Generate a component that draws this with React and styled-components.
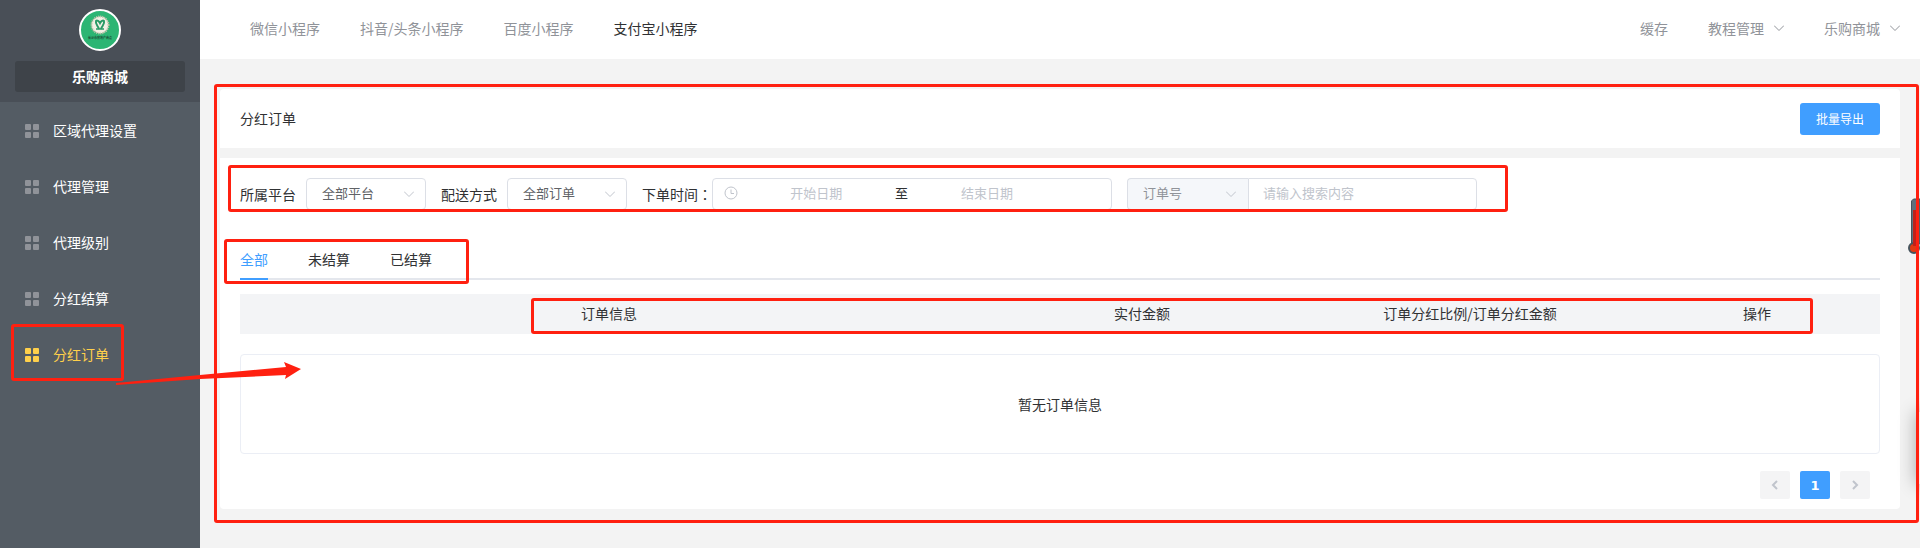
import React from "react";
import styled, { createGlobalStyle } from "styled-components";

const GlobalStyle = createGlobalStyle`
  * {
    box-sizing: border-box;
  }

  body {
    margin: 0;
    background-color: #f3f3f3;
    color: #303133;
    font-family: "Noto Sans CJK SC", sans-serif;
    font-size: 14px;
    line-height: 20px;
  }

  button,
  input,
  select {
    font-family: inherit;
  }
`;

const Page = styled.div`
  position: relative;
  display: flex;
  min-height: 100vh;
  overflow: hidden;
`;

const Sidebar = styled.aside`
  flex: none;
  width: 200px;
  background-color: #545c64;
`;

const Shop = styled.div`
  display: flex;
  flex-direction: column;
  align-items: center;
  gap: 10px;
  padding: 9px 15px 10px;
  background-color: #494f57;
`;

const ShopName = styled.div`
  width: 100%;
  padding: 5px 0 6px;
  border-radius: 3px;
  background-color: #3e4349;
  color: #ffffff;
  font-weight: bold;
  text-align: center;
`;

const MenuItem = styled.a`
  position: relative;
  display: flex;
  align-items: center;
  gap: 14px;
  height: 56px;
  padding-left: 25px;
  color: ${(props) => (props.$active ? "#ffd04b" : "#ffffff")};
  text-decoration: none;

  svg {
    fill: ${(props) => (props.$active ? "#ffd04b" : "#909399")};
  }
`;

const MenuIcon = styled.svg`
  margin-top: 2px;
`;

const Main = styled.div`
  flex: 1;
  min-width: 0;
`;

const Header = styled.header`
  display: flex;
  align-items: center;
  justify-content: space-between;
  height: 59px;
  padding: 0 20px 3px 50px;
  background-color: #ffffff;
`;

const Nav = styled.nav`
  display: flex;
  gap: 40px;
`;

const NavLink = styled.a`
  display: flex;
  align-items: center;
  gap: 10px;
  color: ${(props) => (props.$active ? "#303133" : "#909399")};
  text-decoration: none;
`;

const Content = styled.main`
  position: relative;
  display: flex;
  flex-direction: column;
  gap: 10px;
  padding: 30px 20px 39px;
`;

const TitleBar = styled.div`
  display: flex;
  align-items: center;
  justify-content: space-between;
  height: 59px;
  padding: 0 20px;
  border-radius: 4px 4px 0 0;
  background-color: #ffffff;
`;

const Title = styled.h1`
  margin: 0;
  padding-bottom: 2px;
  font-size: 14px;
  font-weight: normal;
`;

const ExportButton = styled.button`
  width: 80px;
  height: 32px;
  padding: 0;
  border: none;
  border-radius: 3px;
  background-color: #409eff;
  color: #ffffff;
  font-size: 12px;
`;

const Card = styled.section`
  padding: 20px 20px 10px;
  border-radius: 0 0 4px 4px;
  background-color: #ffffff;
`;

const Filters = styled.form`
  position: relative;
  display: flex;
  align-items: center;
  gap: 15px;
  margin-bottom: 30px;
`;

const Field = styled.div`
  display: flex;
  align-items: center;
  gap: ${(props) => props.$gap || "0"};
`;

/* the TC face centres the full-width colon */
const Colon = styled.span`
  font-family: "Noto Sans CJK TC", sans-serif;
`;

const SelectBox = styled.div`
  position: relative;
  width: 120px;

  svg {
    position: absolute;
    top: 10px;
    right: 12px;
    pointer-events: none;
  }
`;

const Select = styled.select`
  appearance: none;
  display: block;
  width: 100%;
  height: 32px;
  padding: 0 15px 4px;
  border: 1px solid #dcdfe6;
  border-radius: 4px;
  background-color: #ffffff;
  color: #606266;
  font-size: 13px;
`;

const DateRange = styled.div`
  display: flex;
  align-items: center;
  width: 400px;
  height: 32px;
  padding: 0 11px 3px;
  border: 1px solid #dcdfe6;
  border-radius: 4px;
  font-size: 13px;

  svg {
    flex: none;
    margin-right: 5px;
  }
`;

const DateInput = styled.input`
  width: 39%;
  padding: 0;
  border: none;
  outline: none;
  background: none;
  font-size: 13px;
  text-align: center;

  &::placeholder {
    color: #c0c4cc;
  }
`;

const Separator = styled.span`
  width: 24px;
  text-align: center;
`;

const Search = styled.div`
  display: flex;
  width: 350px;

  ${SelectBox} {
    width: 121px;
  }

  ${Select} {
    border-right: none;
    border-radius: 4px 0 0 4px;
    background-color: #f5f7fa;
    color: #909399;
  }
`;

const SearchInput = styled.input`
  flex: 1;
  min-width: 0;
  height: 32px;
  padding: 0 14px 4px;
  border: 1px solid #dcdfe6;
  border-radius: 0 4px 4px 0;
  font-size: 13px;

  &::placeholder {
    color: #c0c4cc;
  }
`;

const Tabs = styled.div`
  position: relative;
  display: flex;
  gap: 40px;
  margin-bottom: 14px;
  box-shadow: inset 0 -2px #e4e7ed;
`;

const Tab = styled.button`
  height: 40px;
  padding: 0;
  border: none;
  border-bottom: 2px solid ${(props) => (props.$active ? "#409eff" : "transparent")};
  background: none;
  color: ${(props) => (props.$active ? "#409eff" : "#303133")};
  font-size: 14px;
`;

const TableWrap = styled.div`
  position: relative;
  margin-bottom: 20px;
`;

const Table = styled.table`
  width: 100%;
  border-collapse: collapse;
  table-layout: fixed;
`;

const Th = styled.th`
  width: ${(props) => props.$width};
  height: 40px;
  padding: 0 0 2px;
  background-color: #f3f4f6;
  font-weight: normal;
`;

const Empty = styled.div`
  display: flex;
  align-items: center;
  justify-content: center;
  height: 100px;
  margin-bottom: 17px;
  border: 1px solid #ebeef5;
  border-radius: 4px;
`;

const Pagination = styled.div`
  display: flex;
  justify-content: flex-end;
  gap: 10px;
  padding-right: 10px;
`;

const PageButton = styled.button`
  display: flex;
  align-items: center;
  justify-content: center;
  width: 30px;
  height: 28px;
  padding: 0;
  border: none;
  border-radius: 2px;
  background-color: ${(props) => (props.$active ? "#409eff" : "#f4f4f5")};
  color: ${(props) => (props.$active ? "#ffffff" : "#c0c4cc")};
  font-family: "DejaVu Sans", sans-serif;
  font-size: 13px;
  font-weight: bold;
`;

/* red annotations over the page */
const Mark = styled.div`
  position: absolute;
  z-index: 2;
  top: ${(props) => props.$top};
  right: ${(props) => props.$right || "auto"};
  bottom: ${(props) => props.$bottom};
  left: ${(props) => props.$left};
  width: ${(props) => props.$width || "auto"};
  border: 3px solid #ff2010;
  border-radius: 3px;
  pointer-events: none;
`;

const ArrowMark = styled.svg`
  position: absolute;
  z-index: 3;
  top: 35px;
  left: 115px;
  pointer-events: none;
`;

const Thermometer = styled.svg`
  position: absolute;
  z-index: 1;
  top: 198px;
  right: 0;
`;

const SidePanel = styled.div`
  position: absolute;
  top: 412px;
  right: -40px;
  width: 44px;
  height: 72px;
  background-color: #f3f3f3;
  box-shadow: 0 0 18px rgba(0, 0, 0, 0.3);
`;

const Logo = () => (
  <svg width="42" height="42" viewBox="0 0 42 42">
    <circle cx="21" cy="21" r="20" fill="#2cb573" stroke="#ffffff" strokeWidth="2" />
    <circle cx="21" cy="16" r="8.5" fill="#f3f1e6" stroke="#c9c2ac" strokeWidth="2" strokeDasharray="1 1" />
    <path
      d="M20 20c-1-3-4-5-3-8 1-1 3 0 4 2 1-2 3-3 4-2 1 3-2 5-3 8"
      fill="none"
      stroke="#2a9a66"
      strokeWidth="2"
    />
    <path d="M17 20h8" stroke="#2a9a66" strokeWidth="1.5" />
    <text x="21" y="30" fill="#1b4a35" fontSize="3" fontWeight="bold" textAnchor="middle">
      长沙市房地产商会
    </text>
  </svg>
);

const GridIcon = () => (
  <MenuIcon width="14" height="14" viewBox="0 0 14 14">
    <rect width="6" height="6" rx="1" />
    <rect x="8" width="6" height="6" rx="1" />
    <rect y="8" width="6" height="6" rx="1" />
    <rect x="8" y="8" width="6" height="6" rx="1" />
  </MenuIcon>
);

const ArrowDown = ({ color = "#c0c4cc" }) => (
  <svg width="10" height="12" viewBox="1 0 10 12" fill="none" stroke={color}>
    <path d="M1 3.5l5 5 5-5" />
  </svg>
);

const Clock = () => (
  <svg width="14" height="14" viewBox="0 0 14 14" fill="none" stroke="#c0c4cc">
    <circle cx="7" cy="7" r="6" />
    <path d="M7 3.5v4h3" />
  </svg>
);

const menu = ["区域代理设置", "代理管理", "代理级别", "分红结算", "分红订单"];

const platforms = ["微信小程序", "抖音/头条小程序", "百度小程序", "支付宝小程序"];

const tabs = ["全部", "未结算", "已结算"];

const columns = [
  { title: "订单信息", width: "45%" },
  { title: "实付金额", width: "20%" },
  { title: "订单分红比例/订单分红金额", width: "20%" },
  { title: "操作", width: "15%" },
];

export default function App() {
  const [tab, setTab] = React.useState("全部");

  return (
    <Page>
      <GlobalStyle />
      <Sidebar>
        <Shop>
          <Logo />
          <ShopName>乐购商城</ShopName>
        </Shop>
        <nav>
          {menu.map((item) => {
            const active = item === "分红订单";
            return (
              <MenuItem key={item} href="#" $active={active}>
                <GridIcon />
                {item}
                {active && (
                  <>
                    <Mark $top="-2px" $bottom="1px" $left="11px" $width="113px" />
                    <ArrowMark width="186" height="40" viewBox="0 0 186 40">
                      <path
                        d="M1 22L85 14 171 6 169 1 186 8 170 18 171 14 85 18 1 24z"
                        fill="#ff2010"
                      />
                    </ArrowMark>
                  </>
                )}
              </MenuItem>
            );
          })}
        </nav>
      </Sidebar>

      <Main>
        <Header>
          <Nav>
            {platforms.map((p) => (
              <NavLink key={p} href="#" $active={p === "支付宝小程序"}>
                {p}
              </NavLink>
            ))}
          </Nav>
          <Nav>
            <NavLink href="#">缓存</NavLink>
            <NavLink href="#">
              教程管理
              <ArrowDown color="#909399" />
            </NavLink>
            <NavLink href="#">
              乐购商城
              <ArrowDown color="#909399" />
            </NavLink>
          </Nav>
        </Header>

        <Content>
          <Mark $top="25px" $right="1px" $bottom="25px" $left="14px" />
          <TitleBar>
            <Title>分红订单</Title>
            <ExportButton>批量导出</ExportButton>
          </TitleBar>

          <Card>
            <Filters>
              <Mark $top="-13px" $bottom="-2px" $left="-12px" $width="1280px" />
              <Field $gap="10px">
                <label htmlFor="platform">所属平台</label>
                <SelectBox>
                  <Select id="platform">
                    <option>全部平台</option>
                  </Select>
                  <ArrowDown />
                </SelectBox>
              </Field>
              <Field $gap="10px">
                <label htmlFor="delivery">配送方式</label>
                <SelectBox>
                  <Select id="delivery">
                    <option>全部订单</option>
                  </Select>
                  <ArrowDown />
                </SelectBox>
              </Field>
              <Field>
                <label htmlFor="start">
                  下单时间<Colon>：</Colon>
                </label>
                <DateRange>
                  <Clock />
                  <DateInput id="start" placeholder="开始日期" />
                  <Separator>至</Separator>
                  <DateInput aria-label="结束日期" placeholder="结束日期" />
                </DateRange>
              </Field>
              <Search>
                <SelectBox>
                  <Select aria-label="搜索类型">
                    <option>订单号</option>
                  </Select>
                  <ArrowDown />
                </SelectBox>
                <SearchInput aria-label="搜索内容" placeholder="请输入搜索内容" />
              </Search>
            </Filters>

            <Tabs>
              <Mark $top="-1px" $bottom="-4px" $left="-16px" $width="245px" />
              {tabs.map((t) => (
                <Tab key={t} $active={t === tab} onClick={() => setTab(t)}>
                  {t}
                </Tab>
              ))}
            </Tabs>

            <TableWrap>
              <Mark $top="4px" $right="67px" $bottom="0" $left="291px" />
              <Table>
                <thead>
                  <tr>
                    {columns.map((c) => (
                      <Th key={c.title} $width={c.width}>
                        {c.title}
                      </Th>
                    ))}
                  </tr>
                </thead>
              </Table>
            </TableWrap>

            <Empty>暂无订单信息</Empty>

            <Pagination>
              <PageButton aria-label="上一页">
                <svg width="8" height="10" viewBox="0 0 8 10" fill="none" stroke="currentColor" strokeWidth="2">
                  <path d="M6 1L2 5l4 4" />
                </svg>
              </PageButton>
              <PageButton $active>1</PageButton>
              <PageButton aria-label="下一页">
                <svg width="8" height="10" viewBox="0 0 8 10" fill="none" stroke="currentColor" strokeWidth="2">
                  <path d="M2 1l4 4-4 4" />
                </svg>
              </PageButton>
            </Pagination>
          </Card>
        </Content>
      </Main>

      <Thermometer width="12" height="58" viewBox="0 0 12 58">
        <path d="M3.5 46V3l2-2H12v45z" fill="#5f6f7b" stroke="#46535c" />
        <circle cx="6" cy="50" r="5" fill="#e03a12" stroke="#46535c" strokeWidth="2" />
        <path d="M5 12h3v36H5z" fill="#c2201a" />
      </Thermometer>
      <SidePanel />
    </Page>
  );
}
